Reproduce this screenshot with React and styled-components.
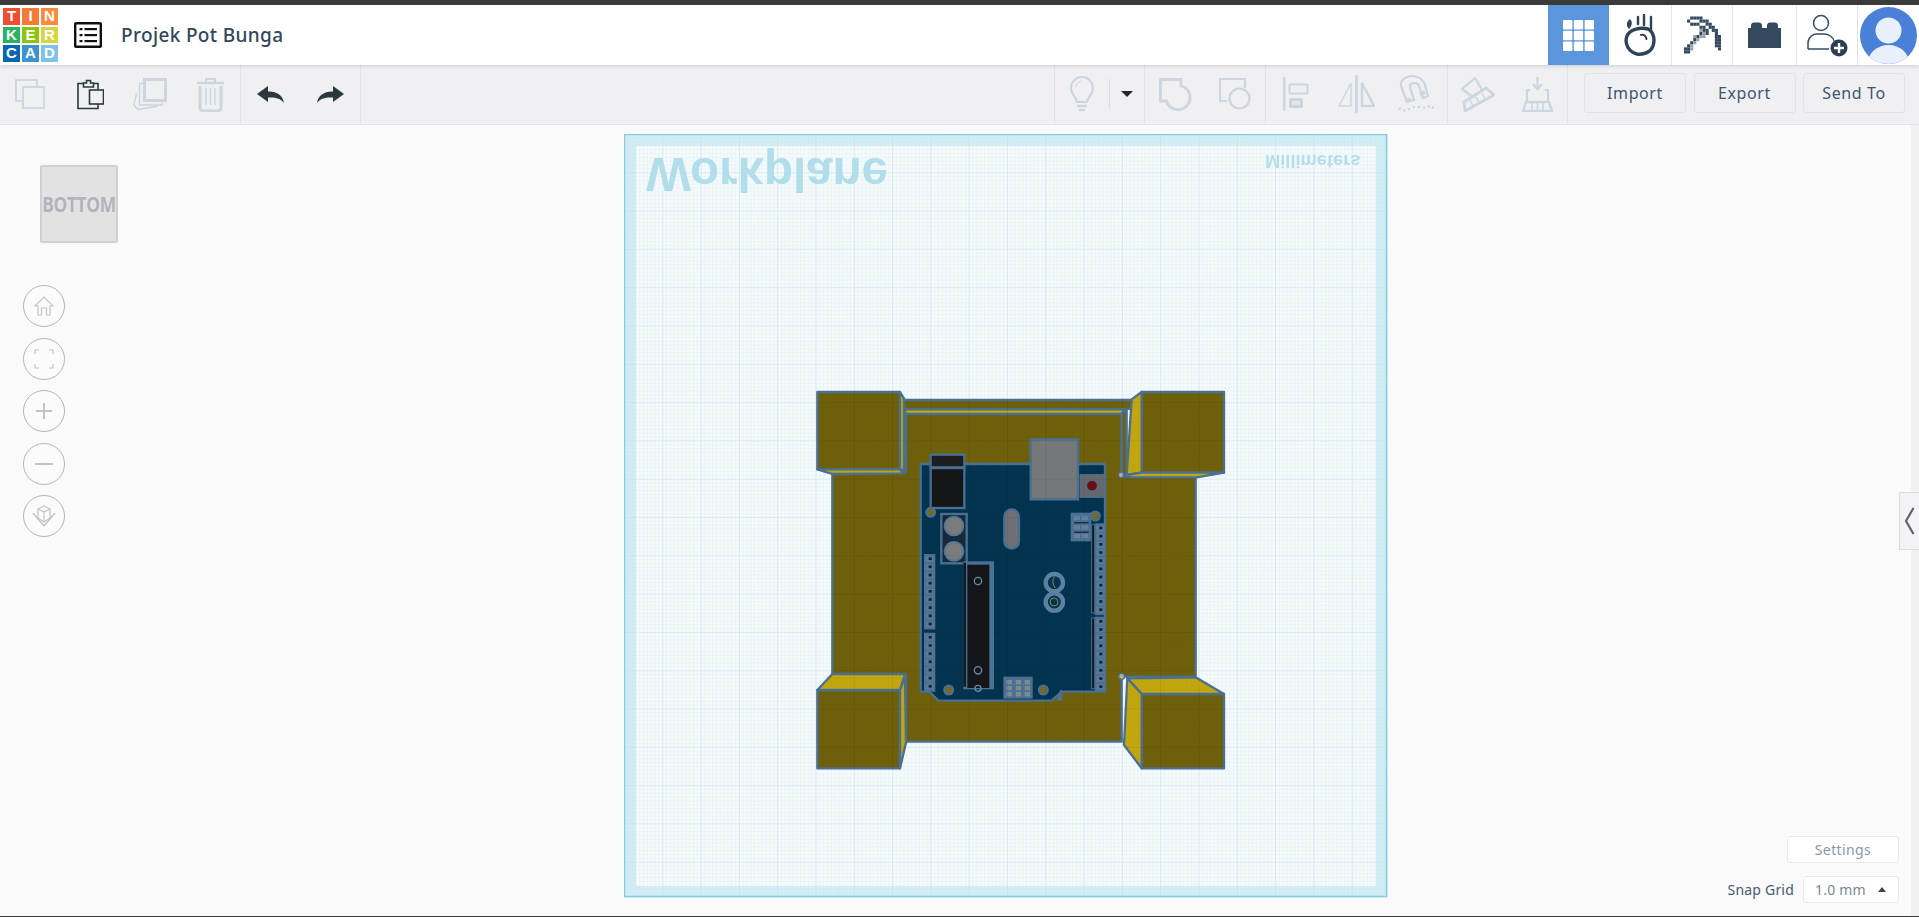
import React from 'react';
import styled, { createGlobalStyle } from 'styled-components';

const Global = createGlobalStyle`
  html, body { margin: 0; padding: 0; height: 100%; overflow: hidden; background: #fafafb; }
  * { box-sizing: border-box; }
`;

const Page = styled.div`
  width: 1919px; height: 917px; display: flex; flex-direction: column;
  font-family: "Noto Sans", "Open Sans", sans-serif; background: #fafafb;
  border-top: 5px solid #3b3b3b; border-bottom: 1px solid #3b3b3b;
`;
const Header = styled.header`
  height: 60px; flex: none; display: flex; align-items: center; background: #fff;
  position: relative; z-index: 2; box-shadow: 0 1px 4px rgba(60, 80, 110, .22);
`;
const Logo = styled.div`
  display: grid; grid-template-columns: repeat(3, 17px); grid-auto-rows: 16.6px; gap: 2px;
  margin: 0 16px 0 3px; flex: none;
`;
const LogoCell = styled.span`
  background: ${p => p.$c}; color: #fff; font: 700 15px/16.6px "Liberation Sans", sans-serif;
  text-align: center;
`;
const ListBtn = styled.div`flex: none; width: 28px; height: 26px; margin-right: 19px;`;
const Title = styled.h1`
  margin: 0; font: 500 19px/1 "Noto Sans", sans-serif; color: #33475b; letter-spacing: .35px;
`;
const HeaderTools = styled.div`margin-left: auto; display: flex; height: 100%; padding-right: 2px;`;
const AppBtn = styled.div`
  width: ${p => p.$w}px; height: 100%; display: flex; align-items: center; justify-content: center;
  background: ${p => (p.$active ? '#5b96dc' : '#fff')};
  border-right: ${p => (p.$active ? 'none' : '1px solid #e2e4e7')};
`;
const AvatarWrap = styled.div`width: 59px; display: flex; align-items: center; justify-content: center; padding-left: 2px;`;

const Toolbar = styled.div`
  height: 60px; flex: none; display: flex; background: #f0f0f3; border-bottom: 1px solid #dfe3e8;
`;
const Group = styled.div`
  display: flex; align-items: center; width: ${p => p.$w}px; flex: none;
  margin-left: ${p => (p.$auto ? 'auto' : 0)};
  border-right: 1px solid #dfe3e8;
  border-left: ${p => (p.$left ? '1px solid #dfe3e8' : 'none')};
  padding-bottom: 1px;
`;
const ToolBtn = styled.div`
  flex: ${p => (p.$basis ? `0 0 ${p.$basis}px` : '1 1 0')}; height: 100%;
  display: flex; align-items: center; justify-content: center;
  color: ${p => (p.$on ? '#2a3a3c' : '#cbd6df')};
`;
const Divider = styled.span`width: 1px; height: 30px; background: #d6dee5; flex: none;`;
const Caret = styled.span`
  flex: none; margin: 0 auto; width: 0; height: 0; border-left: 6px solid transparent;
  border-right: 6px solid transparent; border-top: 6px solid #1f2b2e;
`;
const Actions = styled.div`
  margin-left: 16px; display: flex; align-items: center; gap: 7.5px; padding: 0 14px 3px 0;
`;
const ActionBtn = styled.button`
  width: 102px; height: 40px; background: #f0f0f3; border: 1px solid #e0e3e8; border-radius: 3px;
  color: #3e5570; font: 400 16px "Noto Sans", sans-serif; letter-spacing: .6px; padding: 0;
`;

const Canvas = styled.main`
  position: relative; flex: 1; background: #fafafb; overflow: hidden;
`;
const EdgeStrip = styled.div`position: absolute; top: 0; right: 0; bottom: 0; width: 8px; background: #f1f1f4;`;
const Plane = styled.svg`position: absolute; left: 624px; top: 9px; display: block; filter: blur(.4px);`;
const Cube = styled.div`
  position: absolute; left: 40px; top: 40px; width: 78px; height: 78px; background: #e2e2e2;
  border: 2px solid #cfcfd2; border-radius: 2px; display: flex; align-items: center; justify-content: center;
  filter: blur(.5px);
`;
const CubeLabel = styled.span`
  color: #b1b4ba; font: 700 17.5px "Open Sans", sans-serif; letter-spacing: -.5px; transform: scaleY(1.2);
`;
const NavStack = styled.nav`
  position: absolute; left: 23px; top: 160px; display: flex; flex-direction: column; gap: 10.5px;
`;
const NavBtn = styled.div`
  width: 42px; height: 42px; border: 1px solid #b4b5b9; border-radius: 50%; background: #fbfbfc;
  display: flex; align-items: center; justify-content: center; color: #c3c3c5;
`;
const SideTab = styled.div`
  position: absolute; right: 0; top: 367px; width: 20px; height: 58px; background: #f3f3f6;
  border: 1px solid #d9dde2; border-right: none; display: flex; align-items: center; justify-content: center;
  color: #5d6468;
`;
const Controls = styled.div`
  position: absolute; right: 20px; bottom: 13px; display: flex; flex-direction: column; align-items: flex-end; gap: 13px;
`;
const SettingsBtn = styled.div`
  width: 112px; height: 27px; background: #fff; border: 1px solid #e6e8ec; border-radius: 3px;
  color: #8a97a8; font: 400 14px/25px "Noto Sans", sans-serif; letter-spacing: .4px; text-align: center;
`;
const SnapRow = styled.div`display: flex; align-items: center; gap: 9px;`;
const SnapLabel = styled.span`color: #47596f; font: 400 14px "Noto Sans", sans-serif; letter-spacing: .2px;`;
const SnapSelect = styled.div`
  width: 96px; height: 27px; background: #fff; border: 1px solid #e6e8ec; border-radius: 3px;
  display: flex; align-items: center; justify-content: space-between; padding: 0 11px;
  color: #7b8591; font: 400 14px "Noto Sans", sans-serif; letter-spacing: .2px;
`;
const UpCaret = styled.span`
  width: 0; height: 0; border-left: 4px solid transparent; border-right: 4px solid transparent;
  border-bottom: 5px solid #444; margin-right: 1px;
`;
const Ico = styled.svg`display: block; flex: none;`;

const logo = [['T','#f04e30'],['I','#f47a3a'],['N','#fb8a40'],['K','#27b463'],['E','#8cc60a'],['R','#d6d63e'],['C','#0b66b4'],['A','#3e92d0'],['D','#7cc3e6']];

const Pix = ({ pts, c = '#34495e', s = 3 }) => pts.map(([x, y], i) => <rect key={i} x={x * s} y={y * s} width={s} height={s} fill={c} />);
const pickDark = [
  [2,0],[3,0],[4,0],[5,0],
  [1,1],[5,1],[6,1],[7,1],
  [2,2],[3,2],[4,2],[7,2],[8,2],
  [5,3],[6,3],[8,3],[9,3],
  [7,4],[9,4],[10,4],
  [7,5],[10,5],
  [10,6],[11,6],[10,7],[11,7],[11,8],[10,8],[11,9],[10,9],[11,10],
  [5,5],[3,7],[1,9],[4,6],[2,8],[0,10],[0,11],[1,11],[1,10],[6,4],
];
const pickLight = [[6,5],[5,6],[4,7],[3,8],[2,9],[2,10],[5,4],[3,6],[6,6]];

const FINE = 3.83;
const Pins = ({ x, y, n, step = 24.5 }) => (
  <g>
    <rect x={x} y={y} width="34" height={n * step + 6} fill="#4b7196" />
    {Array.from({ length: n }).map((_, i) => (
      <g key={i}>
        <rect x={x + 5} y={y + 6 + i * step} width="24" height={step - 6} fill="#587a96" />
        <rect x={x + 14} y={y + 10 + i * step} width="9" height="8" fill="#10222e" />
      </g>
    ))}
  </g>
);

const SILHOUETTE = [
  '97,275 318,275 318,90 965,90 965,290 1187,290 1187,890 965,890 965,1085 318,1085 318,885 97,885',
  '52,36 312,36 312,280 52,268',
  '980,36 1272,36 1272,278 980,285',
  '52,930 97,882 315,882 318,1088 300,1165 52,1165',
  '982,895 1187,892 1272,942 1272,1165 1025,1165 972,1095',
  '306,60 995,60 995,100 312,100',
];

const Model = () => {
  const S = '#4a7094', W = 7;
  const olive = '#6f600b', yellow = '#c3a70f';
  const Solid = p => <polygon stroke={S} strokeWidth={W} strokeLinejoin="round" {...p} />;
  return (
    <g transform="translate(800 380) scale(.33333)">
      <Solid points={SILHOUETTE[0]} fill={olive} />
      <Solid points="306,60 995,60 995,85 975,88 312,88" fill={olive} />
      <Solid points="312,88 975,88 965,102 318,102" fill={yellow} />
      <Solid points="965,100 980,92 980,285 965,290" fill={olive} />
      <Solid points="52,36 300,36 300,268 52,268" fill={olive} />
      <Solid points="300,36 312,55 312,270 300,268" fill={yellow} />
      <Solid points="52,268 300,268 312,280 97,282" fill={yellow} />
      <Solid points="1025,36 1272,36 1272,278 1025,278" fill={olive} />
      <Solid points="1025,36 995,58 980,285 1025,278" fill={yellow} />
      <Solid points="980,285 1025,278 1272,278 1190,292 990,292" fill={yellow} />
      <Solid points="52,930 300,930 300,1165 52,1165" fill={olive} />
      <Solid points="52,930 97,882 315,882 300,930" fill={yellow} />
      <Solid points="300,930 315,890 318,1088 300,1165" fill={yellow} />
      <Solid points="1025,942 1272,942 1272,1165 1025,1165" fill={olive} />
      <Solid points="982,895 1187,892 1272,942 1025,942" fill={yellow} />
      <Solid points="982,895 1025,942 1025,1165 972,1095" fill={yellow} />
      <circle cx="963" cy="285" r="8" fill="#b9b291" stroke={S} strokeWidth="4" />
      <circle cx="965" cy="889" r="9" fill="#b9b291" stroke={S} strokeWidth="4" />

      <Solid points="362,252 915,252 915,935 785,935 755,962 415,962 388,935 362,935" fill="#03344f" />
      <polygon points="770,962 780,930 787,930 787,962" fill="#4b7296" />
      <rect x="392" y="224" width="101" height="38" fill="#1b1d20" stroke={S} strokeWidth={W} />
      <rect x="392" y="264" width="101" height="120" fill="#141619" stroke={S} strokeWidth={W} />
      <rect x="692" y="178" width="142" height="180" fill="#77787a" stroke={S} strokeWidth={W} />
      <rect x="840" y="284" width="72" height="68" fill="#65696d" stroke="#4b7296" strokeWidth="3" />
      <circle cx="876" cy="317" r="16" fill="#6a0d18" stroke="#4b7296" strokeWidth="3" />
      <circle cx="392" cy="397" r="13" fill="#7a6a1a" stroke={S} strokeWidth={W} />
      <circle cx="886" cy="408" r="13" fill="#7a6a1a" stroke={S} strokeWidth={W} />
      <circle cx="446" cy="930" r="13" fill="#7a6a1a" stroke={S} strokeWidth={W} />
      <circle cx="730" cy="930" r="13" fill="#7a6a1a" stroke={S} strokeWidth={W} />
      <rect x="424" y="402" width="76" height="148" fill="#182a38" stroke={S} strokeWidth={W} />
      <circle cx="462" cy="438" r="28" fill="#7b7d7d" stroke="#56789a" strokeWidth="6" />
      <circle cx="462" cy="514" r="28" fill="#7b7d7d" stroke="#56789a" strokeWidth="6" />
      <rect x="613" y="388" width="44" height="118" rx="22" fill="#6f7174" stroke={S} strokeWidth={W} />
      <rect x="812" y="398" width="62" height="86" fill="#4b7296" />
      {[408, 436, 462].map(y => <g key={y}>
        <rect x="822" y={y} width="18" height="12" fill="#64829c" /><rect x="846" y={y} width="18" height="12" fill="#64829c" />
      </g>)}
      <rect x="822" y="427" width="44" height="3" fill="#111" /><rect x="822" y="455" width="44" height="3" fill="#111" />

      <Pins x={372} y={522} n={9} /><Pins x={372} y={758} n={7} />
      <Pins x={884} y={430} n={11} /><Pins x={884} y={710} n={9} />
      <rect x="875" y="434" width="9" height="265" fill="#15191c" stroke={S} strokeWidth="3" />
      <rect x="875" y="714" width="9" height="212" fill="#15191c" stroke={S} strokeWidth="3" />

      <rect x="490" y="544" width="92" height="384" fill="#4b7296" />
      <rect x="502" y="554" width="66" height="370" fill="#141619" />
      <rect x="490" y="548" width="8" height="372" fill="#0f1a22" />
      <circle cx="534" cy="603" r="11" fill="none" stroke="#6b8ba6" strokeWidth="4" />
      <circle cx="534" cy="871" r="11" fill="none" stroke="#6b8ba6" strokeWidth="4" />
      <circle cx="534" cy="925" r="9" fill="none" stroke="#6b8ba6" strokeWidth="4" />

      <circle cx="763" cy="608" r="26" fill="none" stroke="#5d82a3" strokeWidth="13" />
      <circle cx="763" cy="666" r="26" fill="none" stroke="#5d82a3" strokeWidth="13" />
      <path d="M763 590 q-10 18 3 34" fill="none" stroke="#8f8a4c" strokeWidth="3" />
      <circle cx="762" cy="666" r="12" fill="none" stroke="#8f8a4c" strokeWidth="3" />

      <rect x="610" y="890" width="88" height="66" fill="#4b7296" />
      {[0, 1, 2].map(c => [0, 1, 2].map(r => (
        <rect key={`${c}${r}`} x={620 + c * 27} y={900 + r * 18} width="16" height="13" fill="#7d8d8e" />
      )))}
    </g>
  );
};

const Workplane = () => (
  <Plane width="764" height="764" viewBox="624 134 764 764" xmlns="http://www.w3.org/2000/svg">
    <defs>
      <pattern id="fine" x="624" y="134" width={FINE} height={FINE} patternUnits="userSpaceOnUse">
        <path d={`M${FINE} 0H0V${FINE}`} fill="none" stroke="#e4eff3" strokeWidth="1" />
      </pattern>
      <pattern id="major" x="624" y="134" width={FINE * 10} height={FINE * 10} patternUnits="userSpaceOnUse">
        <path d={`M${FINE * 10} 0H0V${FINE * 10}`} fill="none" stroke="#c9e5ee" strokeWidth="1.200" />
      </pattern>
      <pattern id="fineDark" x="624" y="134" width={FINE} height={FINE} patternUnits="userSpaceOnUse">
        <path d={`M${FINE} 0H0V${FINE}`} fill="none" stroke="#000" strokeOpacity=".03" strokeWidth="1" />
      </pattern>
      <pattern id="majorDark" x="624" y="134" width={FINE * 10} height={FINE * 10} patternUnits="userSpaceOnUse">
        <path d={`M${FINE * 10} 0H0V${FINE * 10}`} fill="none" stroke="#000" strokeOpacity=".1" strokeWidth="1" />
      </pattern>
      <clipPath id="modelClip">
        {SILHOUETTE.map(p => <polygon key={p} points={p} transform="translate(800 380) scale(.33333)" />)}
      </clipPath>
    </defs>
    <rect x="624.500" y="134.500" width="763" height="763" fill="#f5fafb" />
    <rect x="624.500" y="134.500" width="763" height="763" fill="url(#fine)" />
    <rect x="624.500" y="134.500" width="763" height="763" fill="url(#major)" />
    <path d="M624.500 134.500h763v763h-763zM636 146v740h740V146z" fill="#b4e1ef" fillOpacity=".55" fillRule="evenodd" />
    <rect x="624.500" y="134.500" width="762" height="762" fill="none" stroke="#87cbe0" strokeWidth="1.500" />
    <text transform="translate(646 158) scale(1 -1)" fontFamily="'Liberation Sans', sans-serif" fontWeight="700" fontSize="47.500" fill="#b2deec">Workplane</text>
    <text transform="translate(1265 155) scale(1 -1)" fontFamily="'Liberation Sans', sans-serif" fontWeight="700" fontSize="18.300" fill="#b5deec">Millimeters</text>
    <Model />
    <g clipPath="url(#modelClip)">
      <rect x="800" y="380" width="440" height="400" fill="url(#fineDark)" />
      <rect x="800" y="380" width="440" height="400" fill="url(#majorDark)" />
    </g>
  </Plane>
);

const App = () => (
  <Page>
    <Global />
    <Header>
      <Logo>{logo.map(([l, c]) => <LogoCell key={l} $c={c}>{l}</LogoCell>)}</Logo>
      <ListBtn>
        <Ico width="28" height="26" viewBox="0 0 28 26">
          <rect x="1.200" y="1.200" width="25.600" height="23.600" rx=".6" fill="none" stroke="#111" strokeWidth="2.400" />
          {[7, 13, 19].map(y => <g key={y}><rect x="5.500" y={y - 1} width="3" height="2.200" fill="#111" /><rect x="10.500" y={y - 1} width="12.500" height="2.200" fill="#111" /></g>)}
        </Ico>
      </ListBtn>
      <Title>Projek Pot Bunga</Title>
      <HeaderTools>
        <AppBtn $w={61} $active>
          <Ico width="31" height="31" viewBox="0 0 31 31">
            {[0, 1, 2].map(c => [0, 1, 2].map(r => <rect key={`${c}${r}`} x={c * 10.800} y={r * 10.800} width="9.400" height="9.400" rx="1" fill="#fff" />))}
          </Ico>
        </AppBtn>
        <AppBtn $w={63}>
          <Ico width="32" height="42" viewBox="0 0 32 42" fill="none" stroke="#2f4358" strokeLinecap="round">
            <path d="M14 3v7M20 1v10M27 3v13" strokeWidth="2.400" />
            <path d="M6 5 C2 8 2 12 5 15 C8 12 9 8 6 5Z" fill="#2f4358" stroke="none" />
            <path d="M3 22 C6 15 17 13 24 15 C30 18 31 26 29 32 C27 38 20 41 13 40 C5 38 0 30 3 22Z" strokeWidth="3.400" />
            <path d="M17 21 C20 20 22 22 22.500 25" strokeWidth="2" />
          </Ico>
        </AppBtn>
        <AppBtn $w={61}>
          <Ico width="37" height="38" viewBox="0 0 36 36"><Pix pts={pickDark} /><Pix pts={pickLight} c="#93a0ad" /></Ico>
        </AppBtn>
        <AppBtn $w={64}>
          <Ico width="33" height="26" viewBox="0 0 33 26">
            <path d="M0 6h3V3.500C3 2 4 0.500 6 0.500h5c2 0 3 1.500 3 3V6h5V3.500c0-1.500 1-3 3-3h5c2 0 3 1.500 3 3V6h3v20H0Z" fill="#34495e" />
          </Ico>
        </AppBtn>
        <AppBtn $w={61}>
          <Ico width="41" height="43" viewBox="0 0 41 43" fill="none" stroke="#3a4c5f" strokeWidth="1.500">
            <circle cx="14" cy="9" r="7.500" />
            <path d="M1 35v-6c0-6 5-9 9-9h7c5 0 9 3 10 7M1 35h21" />
            <circle cx="32" cy="34" r="8.500" fill="#2c3f52" stroke="none" />
            <path d="M32 29v10M27 34h10" stroke="#fff" strokeWidth="2.400" />
          </Ico>
        </AppBtn>
        <AvatarWrap>
          <Ico width="57" height="57" viewBox="0 0 57 57">
            <defs><clipPath id="av"><circle cx="28.500" cy="28.500" r="28.500" /></clipPath></defs>
            <circle cx="28.500" cy="28.500" r="28.500" fill="#4a80d8" />
            <circle cx="28.500" cy="23.500" r="13" fill="#e9f0fb" />
            <ellipse cx="28.500" cy="57" rx="21" ry="19" fill="#e9f0fb" clipPath="url(#av)" />
          </Ico>
        </AvatarWrap>
      </HeaderTools>
    </Header>

    <Toolbar>
      <Group $w={241}>
        <ToolBtn>
          <Ico width="30" height="30" viewBox="0 0 30 30" fill="none" stroke="currentColor" strokeWidth="1.800">
            <rect x="1" y="1" width="21" height="21" /><rect x="8" y="8" width="21" height="21" fill="#f0f0f3" />
          </Ico>
        </ToolBtn>
        <ToolBtn $on>
          <Ico width="27" height="31" viewBox="0 0 27 31" fill="none" stroke="currentColor" strokeWidth="1.600">
            <path d="M7 4.500H1v25h20v-5M16 4.500h5v6" />
            <path d="M6.500 8V4h3V1.500h4V4h3v4Z" fill="#f0f0f3" />
            <rect x="12.500" y="11" width="14" height="14" fill="#f0f0f3" />
          </Ico>
        </ToolBtn>
        <ToolBtn>
          <Ico width="34" height="33" viewBox="0 0 34 33" fill="none" stroke="currentColor" strokeWidth="1.500">
            <path d="M3.500 15 1 27l4 4.500 20-3.500" />
            <path d="M11 5.500H6.500V27H29v-4" />
            <rect x="11.500" y="1.500" width="21" height="21" strokeWidth="3" fill="#f0f0f3" />
          </Ico>
        </ToolBtn>
        <ToolBtn>
          <Ico width="27" height="35" viewBox="0 0 27 35" fill="none" stroke="currentColor">
            <path d="M0 6h27" strokeWidth="2.600" /><path d="M9 5V2h9v3" strokeWidth="2" />
            <path d="M3 9v21c0 2 1 4 4 4h13c3 0 4-2 4-4V9" strokeWidth="3" />
            <path d="M9 11v17M13.500 11v17M18 11v17" strokeWidth="1.500" />
          </Ico>
        </ToolBtn>
      </Group>
      <Group $w={120}>
        <ToolBtn $on>
          <Ico width="27" height="17" viewBox="0 0 27 17" fill="currentColor"><path d="M0 8 11 0v5.500c8-.5 15 3.500 16 11.500-3-4.500-9-6-16-5.500V16Z" /></Ico>
        </ToolBtn>
        <ToolBtn $on>
          <Ico width="27" height="17" viewBox="0 0 27 17" fill="currentColor"><path d="M27 8 16 0v5.500C8 5 1 9 0 17c3-4.500 9-6 16-5.500V16Z" /></Ico>
        </ToolBtn>
      </Group>
      <Group $w={91} $auto $left>
        <ToolBtn $basis={54}>
          <Ico width="24" height="36" viewBox="0 0 24 36" fill="none" stroke="currentColor" strokeWidth="2.200">
            <path d="M7 26c0-4-6-7-6-14C1 6 6 1 12 1s11 5 11 11c0 7-6 10-6 14Z" />
            <path d="M7 30h10" strokeWidth="2.400" /><path d="M9 34h6" strokeWidth="2.400" /><path d="M6 11c0-3 2-5 5-6" strokeWidth="1" />
          </Ico>
        </ToolBtn>
        <Divider />
        <Caret />
      </Group>
      <Group $w={121}>
        <ToolBtn>
          <Ico width="33" height="33" viewBox="0 0 33 33" fill="none" stroke="currentColor" strokeWidth="2.800">
            <path d="M22 8V1.500H1.500V23H7.500A12 12 0 1 0 22 8Z" />
          </Ico>
        </ToolBtn>
        <ToolBtn>
          <Ico width="32" height="32" viewBox="0 0 32 32" fill="none" stroke="currentColor" strokeWidth="2.200">
            <path d="M8 23H1V1h25v9" /><circle cx="20.500" cy="20.500" r="10" />
          </Ico>
        </ToolBtn>
      </Group>
      <Group $w={182}>
        <ToolBtn>
          <Ico width="26" height="34" viewBox="0 0 26 34" fill="currentColor">
            <rect x="0" y="0" width="2.400" height="34" rx="1" />
            <rect x="6.500" y="7.500" width="18" height="9" rx="1" fill="none" stroke="currentColor" strokeWidth="2" />
            <rect x="6" y="21" width="14" height="10" rx="1" />
            <rect x="9" y="24" width="8" height="4" fill="#e3e7ec" />
          </Ico>
        </ToolBtn>
        <ToolBtn>
          <Ico width="37" height="38" viewBox="0 0 37 38" fill="none" stroke="currentColor">
            <path d="M18.500 0v38" strokeWidth="2.600" /><path d="M13 8v23H1Z" strokeWidth="1.400" /><path d="M24 8v23h12Z" strokeWidth="2.400" />
          </Ico>
        </ToolBtn>
        <ToolBtn>
          <Ico width="37" height="38" viewBox="0 0 37 38" fill="none" stroke="currentColor">
            <path d="M9 27 3 11C2 5 8 1 14 1s12 4 13 9l3 11-5 2-4-12c-1-4-10-4-9 1l4 13Z" strokeWidth="2.200" />
            <path d="M8 26l5-2M22 19l5-1.500" strokeWidth="4" />
            <path d="M1 33c2 2 5 3 8 2s7-4 12-3 8 1 10-1 4 2 5 3" strokeWidth="2.400" strokeDasharray="2 3" />
          </Ico>
        </ToolBtn>
      </Group>
      <Group $w={120}>
        <ToolBtn>
          <Ico width="34" height="35" viewBox="0 0 34 35" fill="none" stroke="currentColor">
            <path d="M1 12 14 1l7 12-9 7Z" strokeWidth="2.200" />
            <path d="M3 25 25 11l8 7-29 16Z" strokeWidth="2.800" /><path d="M9 23l3 6M15 20l3 6M21 16l3 6" strokeWidth="1.500" />
          </Ico>
        </ToolBtn>
        <ToolBtn>
          <Ico width="31" height="35" viewBox="0 0 31 35" fill="none" stroke="currentColor">
            <path d="M15.500 0v11M11 7l4.500 5L20 7" strokeWidth="2.200" />
            <path d="M8 13H5v12M26 25V13h-3" strokeWidth="2.200" />
            <path d="M4 25h23l3 9H1Z" strokeWidth="2.600" /><path d="M10 26v7M15.500 26v7M21 26v7" strokeWidth="1.600" />
          </Ico>
        </ToolBtn>
      </Group>
      <Actions>
        <ActionBtn>Import</ActionBtn>
        <ActionBtn>Export</ActionBtn>
        <ActionBtn>Send To</ActionBtn>
      </Actions>
    </Toolbar>

    <Canvas>
      <EdgeStrip />
      <Workplane />
      <Cube><CubeLabel>BOTTOM</CubeLabel></Cube>
      <NavStack>
        <NavBtn>
          <Ico width="20" height="20" viewBox="0 0 20 20" fill="none" stroke="currentColor" strokeWidth="1.200">
            <path d="M1 10 10 1l9 9h-3v9h-3.500v-7h-5v7H4v-9Z" />
          </Ico>
        </NavBtn>
        <NavBtn>
          <Ico width="20" height="20" viewBox="0 0 20 20" fill="none" stroke="currentColor" strokeWidth="1.200">
            <path d="M5 1H1v4M15 1h4v4M5 19H1v-4M15 19h4v-4" />
          </Ico>
        </NavBtn>
        <NavBtn>
          <Ico width="18" height="18" viewBox="0 0 18 18" stroke="currentColor" strokeWidth="2"><path d="M9 1v16M1 9h16" /></Ico>
        </NavBtn>
        <NavBtn>
          <Ico width="20" height="4" viewBox="0 0 20 4" stroke="currentColor" strokeWidth="2"><path d="M1 2h18" /></Ico>
        </NavBtn>
        <NavBtn>
          <Ico width="24" height="22" viewBox="0 0 24 22" fill="none" stroke="currentColor" strokeWidth="1.200">
            <path d="M12 1 6 4v9l6 4 6-4V4ZM6 4l6 3 6-3M12 7v10" /><path d="M1 8l11 13L23 8" strokeWidth="1.400" />
          </Ico>
        </NavBtn>
      </NavStack>
      <SideTab>
        <Ico width="11" height="28" viewBox="0 0 11 28" fill="none" stroke="currentColor" strokeWidth="2.200"><path d="M9.500 1 2 14l7.500 13" /></Ico>
      </SideTab>
      <Controls>
        <SettingsBtn>Settings</SettingsBtn>
        <SnapRow>
          <SnapLabel>Snap Grid</SnapLabel>
          <SnapSelect>1.0 mm<UpCaret /></SnapSelect>
        </SnapRow>
      </Controls>
    </Canvas>
  </Page>
);

export default App;
